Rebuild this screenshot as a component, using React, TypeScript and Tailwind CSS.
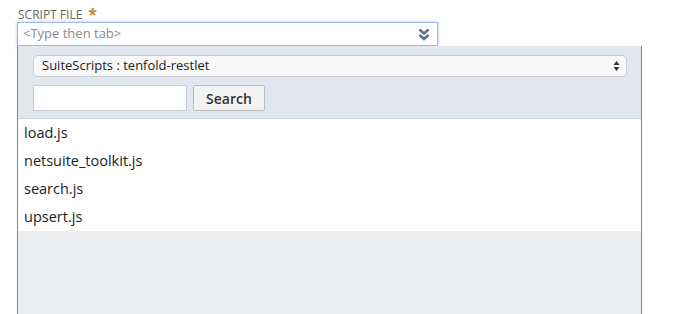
const files = ['load.js', 'netsuite_toolkit.js', 'search.js', 'upsert.js']

function ScriptFileField() {
  return (
    <div className="pl-[17px] pt-[5px] font-['Open_Sans',sans-serif]">
      <div className="flex h-[17px] items-end pl-px text-[12px] leading-[15px] text-[#666]">
        <span>SCRIPT FILE</span>
        <span className="ml-[6px] text-[16px] font-bold leading-[16px] text-[#c08a20]">*</span>
      </div>

      <div className="flex h-[24px] w-[421px] items-center justify-between border border-[#a3b8e3] bg-white pl-[5px] pr-[4px] shadow-[0_0_3px_rgba(100,140,220,0.55)]">
        <span className="text-[13px] text-[#8a8a8a]">&lt;Type then tab&gt;</span>
        <svg width="12" height="13" viewBox="0 0 12 13" className="mr-[3px]">
          <path d="M1.5 1.5 L6 5.5 L10.5 1.5" fill="none" stroke="#5f6f8c" strokeWidth="2.6" />
          <path d="M1.5 7 L6 11 L10.5 7" fill="none" stroke="#5f6f8c" strokeWidth="2.6" />
        </svg>
      </div>

      <div className="flex h-[270px] w-[625px] flex-col border border-t-0 border-[#6685cc] bg-[#eceff2]">
        <div className="flex flex-col gap-[8px] border-b border-[#cfd4dd] bg-[#e1e6f0] px-[15px] pb-[7px] pt-[9px]">
          <div className="flex h-[22px] w-[594px] items-center justify-between rounded-[5px] border border-[#c9ccd2] bg-[#f8f8f8] pl-[8px] pr-[6px]">
            <span className="text-[13px] text-[#222]">SuiteScripts : tenfold-restlet</span>
            <svg width="7" height="12" viewBox="0 0 7 12">
              <path d="M3.5 1 L6.5 5 L0.5 5 Z" fill="#333" />
              <path d="M3.5 11 L6.5 7 L0.5 7 Z" fill="#333" />
            </svg>
          </div>
          <div className="flex gap-[6px]">
            <div className="h-[26px] w-[154px] border border-[#c8ccd3] bg-white" />
            <button className="h-[26px] w-[72px] rounded-[2px] border border-[#bdbdbd] bg-[#f3f3f3] text-[14px] font-semibold text-[#333]">
              Search
            </button>
          </div>
        </div>

        <ul className="bg-white">
          {files.map((f) => (
            <li key={f} className="h-[28px] pl-[6px] text-[14.5px] leading-[28px] text-[#222]">
              {f}
            </li>
          ))}
        </ul>
      </div>
    </div>
  )
}

export default function App() {
  return (
    <div className="h-[314px] w-[688px] overflow-hidden bg-white">
      <ScriptFileField />
    </div>
  )
}
